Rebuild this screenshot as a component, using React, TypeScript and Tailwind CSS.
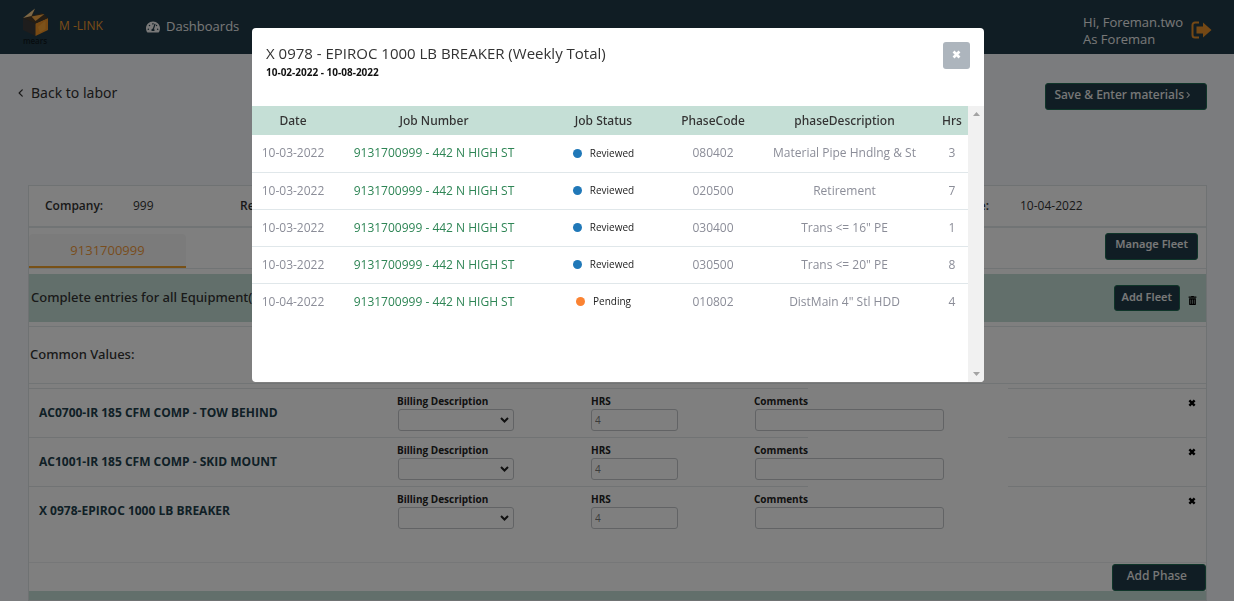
import React from "react";
import { FaTachometerAlt, FaTrashAlt } from "react-icons/fa";
import { FaAngleLeft, FaAngleRight } from "react-icons/fa6";

type Entry = {
  date: string;
  job: string;
  status: "Reviewed" | "Pending";
  code: string;
  description: string;
  hrs: number;
};

const entries: Entry[] = [
  { date: "10-03-2022", job: "9131700999 - 442 N HIGH ST", status: "Reviewed", code: "080402", description: "Material Pipe Hndlng & St", hrs: 3 },
  { date: "10-03-2022", job: "9131700999 - 442 N HIGH ST", status: "Reviewed", code: "020500", description: "Retirement", hrs: 7 },
  { date: "10-03-2022", job: "9131700999 - 442 N HIGH ST", status: "Reviewed", code: "030400", description: 'Trans <= 16" PE', hrs: 1 },
  { date: "10-03-2022", job: "9131700999 - 442 N HIGH ST", status: "Reviewed", code: "030500", description: 'Trans <= 20" PE', hrs: 8 },
  { date: "10-04-2022", job: "9131700999 - 442 N HIGH ST", status: "Pending", code: "010802", description: 'DistMain 4" Stl HDD', hrs: 4 },
];

const equipment = [
  "AC0700-IR 185 CFM COMP - TOW BEHIND",
  "AC1001-IR 185 CFM COMP - SKID MOUNT",
  "X 0978-EPIROC 1000 LB BREAKER",
];

const darkButton =
  "flex items-center rounded-[3px] border border-[#1f6b52] bg-[#203b48] font-['Noto_Sans','Open_Sans',sans-serif] text-[#f0f0f0]";

function Logo() {
  return (
    <svg viewBox="0 0 28 38" className="h-[38px] w-7" role="img" aria-label="Mears">
      <path d="M1 10 13.500 15.500V28L1 22Z" fill="#3c3a3a" />
      <path d="M13.500 15.500 26 10V22L13.500 28Z" fill="#ef9326" />
      <path d="M1 10 13 1.500 10.500 7.500 20 5 26 10 13.500 15.500Z" fill="#4a3a28" />
      <path d="M1 10 13 .500 9.500 8Z" fill="#f8cf8c" />
      <path d="M9.500 8.500 22.500 6 13.500 13Z" fill="#f7a944" />
      <path d="M16 19 23.500 12.500V21L18 24.500Z" fill="#ffb03f" opacity=".6" />
      <text x="13" y="36" textAnchor="middle" fontSize="8" fontWeight="600" fill="#0e171c" fontFamily="Open Sans">
        mears
      </text>
    </svg>
  );
}

function SignOutIcon() {
  return (
    <svg viewBox="0 0 21 18" className="h-[18px] w-[21px]" aria-hidden="true">
      <path d="M8 1.500H4A2.500 2.500 0 0 0 1.500 4v10A2.500 2.500 0 0 0 4 16.500h4" fill="none" stroke="#e8912b" strokeWidth="2" />
      <path d="M5.500 5.500H12V1.500L20.500 9 12 16.500V12.500H5.500Z" fill="#e8912b" />
    </svg>
  );
}

function CrossIcon({ className }: { className: string }) {
  return (
    <svg viewBox="0 0 10 10" className={className} aria-hidden="true">
      <path d="M1.700 1.700 8.300 8.300M8.300 1.700 1.700 8.300" fill="none" stroke="currentColor" strokeWidth="3" />
    </svg>
  );
}

function NavBar() {
  return (
    <header className="flex h-[54px] shrink-0 items-center bg-[#203b48] px-[22px]">
      <Logo />
      <span className="ml-[9px] w-[87px] pb-0.5 text-xs text-[#f39c2f]">M -LINK</span>
      <a href="#dashboards" className="flex items-center gap-1.5 text-[13px] text-[#f0f0f0]">
        <FaTachometerAlt className="size-3.5" />
        Dashboards
      </a>
      <div className="mt-2 ml-auto text-[13px] leading-[17px] text-[#f0f0f0]">
        <p>Hi, Foreman.two</p>
        <p>As Foreman</p>
      </div>
      <button type="button" aria-label="Sign out" className="mt-1.5 ml-2">
        <SignOutIcon />
      </button>
    </header>
  );
}

function EquipmentRow({ name, index }: { name: string; index: number }) {
  const id = `equipment-${index}`;
  const label = "block text-[10px] leading-[14px] font-bold text-[#222]";
  const field = "block h-[22px] rounded-[3px] border border-[#c4c7ca] bg-white text-[10px] text-[#777]";
  return (
    <div className="flex h-[49px]">
      <div className="flex flex-1 border-t border-[#e3e6e9]">
        <h3 className="w-[368px] pt-4 pl-2.5 text-xs font-bold text-[#21404c]">{name}</h3>
        <div className="w-[194px] pt-[5px]">
          <label htmlFor={`${id}-billing`} className={label}>Billing Description</label>
          <div className="relative mt-px ml-px w-[116px]">
            <select id={`${id}-billing`} className={`${field} w-full appearance-none`} defaultValue="">
              <option value=""></option>
            </select>
            <svg viewBox="0 0 9 6" className="pointer-events-none absolute top-2 right-[5px] h-1.5 w-[9px]" aria-hidden="true">
              <path d="M1 1 4.500 4.500 8 1" fill="none" stroke="#222" strokeWidth="2" />
            </svg>
          </div>
        </div>
        <div className="w-[163px] pt-[5px]">
          <label htmlFor={`${id}-hrs`} className={label}>HRS</label>
          <input id={`${id}-hrs`} defaultValue="4" className={`${field} mt-px w-[87px] px-[3px]`} />
        </div>
        <div className="w-[54px] pt-[5px]">
          <label htmlFor={`${id}-comments`} className={label}>Comments</label>
          <input id={`${id}-comments`} className={`${field} mt-px ml-px w-[189px] px-[3px]`} />
        </div>
      </div>
      <div className="ml-[200px] flex w-[198px] items-start justify-end border-t border-[#e3e6e9] pt-2.5 pr-2.5">
        <button type="button" aria-label={`Remove ${name}`}>
          <CrossIcon className="size-2 text-black" />
        </button>
      </div>
    </div>
  );
}

function LaborPage() {
  return (
    <main className="flex flex-1 flex-col pr-[27px] pl-7 text-[#333]">
      <div className="-ml-3 flex h-[131px] items-start justify-between pt-7">
        <a href="#labor" className="flex items-center gap-[5px] font-['Noto_Sans','Open_Sans',sans-serif] text-sm leading-[22px] text-[#333]">
          <FaAngleLeft className="size-2.5" />
          Back to labor
        </a>
        <button type="button" className={`${darkButton} mt-px h-[27px] pr-3.5 pb-1 pl-2 text-xs font-medium`}>
          Save &amp; Enter materials
          <FaAngleRight className="size-2" />
        </button>
      </div>

      <section className="flex flex-1 flex-col border border-[#dfe5e6] bg-white">
        <dl className="flex h-[42px] shrink-0 items-center border-b-2 border-[#e3e8ea] text-xs">
          <dt className="w-[88px] pl-4 font-semibold">Company:</dt>
          <dd className="w-[107px] pl-4">999</dd>
          <dt className="pl-4 font-semibold">Req:</dt>
          <dt className="ml-auto font-semibold">Date:</dt>
          <dd className="w-[217px] pl-[31px]">10-04-2022</dd>
        </dl>

        <div className="flex h-[41px] shrink-0 items-end justify-between border-b border-[#e3e8ea]">
          <button type="button" className="h-[34px] w-[157px] rounded-t border-b-2 border-[#f0a22e] bg-[#f6f6f6] pt-0.5 text-[13px] text-[#f29b3c]">
            9131700999
          </button>
          <button type="button" className={`${darkButton} mr-2 mb-2 h-[27px] px-[9px] pb-1 text-[11px] font-semibold`}>
            Manage Fleet
          </button>
        </div>

        <div className="mt-[5px] flex h-12 shrink-0 items-center bg-[#c5dfd6] pr-[9px] pl-0.5">
          <h2 className="font-['Noto_Sans','Open_Sans',sans-serif] text-[13px] font-medium">Complete entries for all Equipment(s)</h2>
          <button type="button" className={`${darkButton} ml-auto h-[26px] px-[7px] pb-0.5 text-[11px] font-semibold`}>
            Add Fleet
          </button>
          <button type="button" aria-label="Delete phase" className="ml-2 pt-1">
            <FaTrashAlt className="size-[9px] text-black" />
          </button>
        </div>

        <div className="mt-1 mb-1 flex h-[58px] shrink-0 items-center border-y border-[#e3e8ea] pl-px">
          <h2 className="font-['Noto_Sans','Open_Sans',sans-serif] text-[13px] font-medium">Common Values:</h2>
        </div>

        <div className="h-[175px] shrink-0 border-b border-[#eceff0]">
          {equipment.map((name, index) => (
            <EquipmentRow key={name} name={name} index={index} />
          ))}
        </div>
        <div className="flex shrink-0 justify-end pt-px">
          <button type="button" className={`${darkButton} h-[27px] pr-[18px] pb-1 pl-3.5 text-xs font-medium`}>
            Add Phase
          </button>
        </div>
        <div className="flex-1 bg-[#c5dfd6]" />
      </section>
    </main>
  );
}

function WeeklyTotalDialog() {
  return (
    <div className="fixed inset-0 flex items-start justify-center bg-black/50 pt-7 pl-0.5">
      <div role="dialog" aria-modal="true" aria-labelledby="weekly-title" className="w-full max-w-[732px] overflow-hidden rounded bg-white">
        <div className="flex h-[78px] items-start justify-between px-3.5 pt-3.5">
          <div>
            <h1 id="weekly-title" className="text-[15px] leading-[22px] text-[#333]">
              X 0978 - EPIROC 1000 LB BREAKER (Weekly Total)
            </h1>
            <p className="text-[10px] leading-4 font-bold text-[#111]">10-02-2022 - 10-08-2022</p>
          </div>
          <button type="button" aria-label="Close" className="flex size-[27px] items-center justify-center rounded-[3px] bg-[#adb5bd] pb-[3px]">
            <CrossIcon className="size-[9px] text-white" />
          </button>
        </div>
        <div className="flex h-[276px]">
          <div className="flex-1">
            <table className="w-full table-fixed text-center text-xs text-[#8b8d98]">
              <colgroup>
                <col className="w-[82px]" />
                <col className="w-[200px]" />
                <col className="w-[139px]" />
                <col className="w-20" />
                <col />
                <col className="w-8" />
              </colgroup>
              <thead>
                <tr className="h-[29px] bg-[#c5dfd6] font-['Noto_Sans','Open_Sans',sans-serif] text-[#333]">
                  <th className="font-medium">Date</th>
                  <th className="font-medium">Job Number</th>
                  <th className="font-medium">Job Status</th>
                  <th className="font-medium">PhaseCode</th>
                  <th className="font-medium">phaseDescription</th>
                  <th className="font-medium">Hrs</th>
                </tr>
              </thead>
              <tbody>
                {entries.map((entry, index) => (
                  <tr key={index} className="h-[37px] border-b border-[#e0e7ea] last:border-b-0">
                    <td>{entry.date}</td>
                    <td>
                      <a href="#job" className="text-[#2e8555]">{entry.job}</a>
                    </td>
                    <td>
                      <span className="flex items-center justify-center gap-2 text-[10px] text-[#222]">
                        <span className={entry.status === "Reviewed" ? "size-[9px] rounded-full bg-[#2078b8]" : "size-[9px] rounded-full bg-[#fb8332]"} />
                        {entry.status}
                      </span>
                    </td>
                    <td>{entry.code}</td>
                    <td className="whitespace-nowrap">{entry.description}</td>
                    <td>{entry.hrs}</td>
                  </tr>
                ))}
              </tbody>
            </table>
          </div>
          <div className="flex w-4 flex-col items-center justify-between bg-[#f1f1f1] py-1.5" aria-hidden="true">
            <svg viewBox="0 0 7 4" className="h-1 w-[7px]"><path d="M0 4 3.500 0 7 4Z" fill="#a3a3a3" /></svg>
            <svg viewBox="0 0 7 4" className="h-1 w-[7px]"><path d="M0 0 3.500 4 7 0Z" fill="#a3a3a3" /></svg>
          </div>
        </div>
      </div>
    </div>
  );
}

export default function App() {
  return (
    <div className="flex h-screen flex-col overflow-hidden bg-[#f7f9fc] font-['Open_Sans','Noto_Sans',sans-serif]">
      <NavBar />
      <LaborPage />
      <WeeklyTotalDialog />
    </div>
  );
}
